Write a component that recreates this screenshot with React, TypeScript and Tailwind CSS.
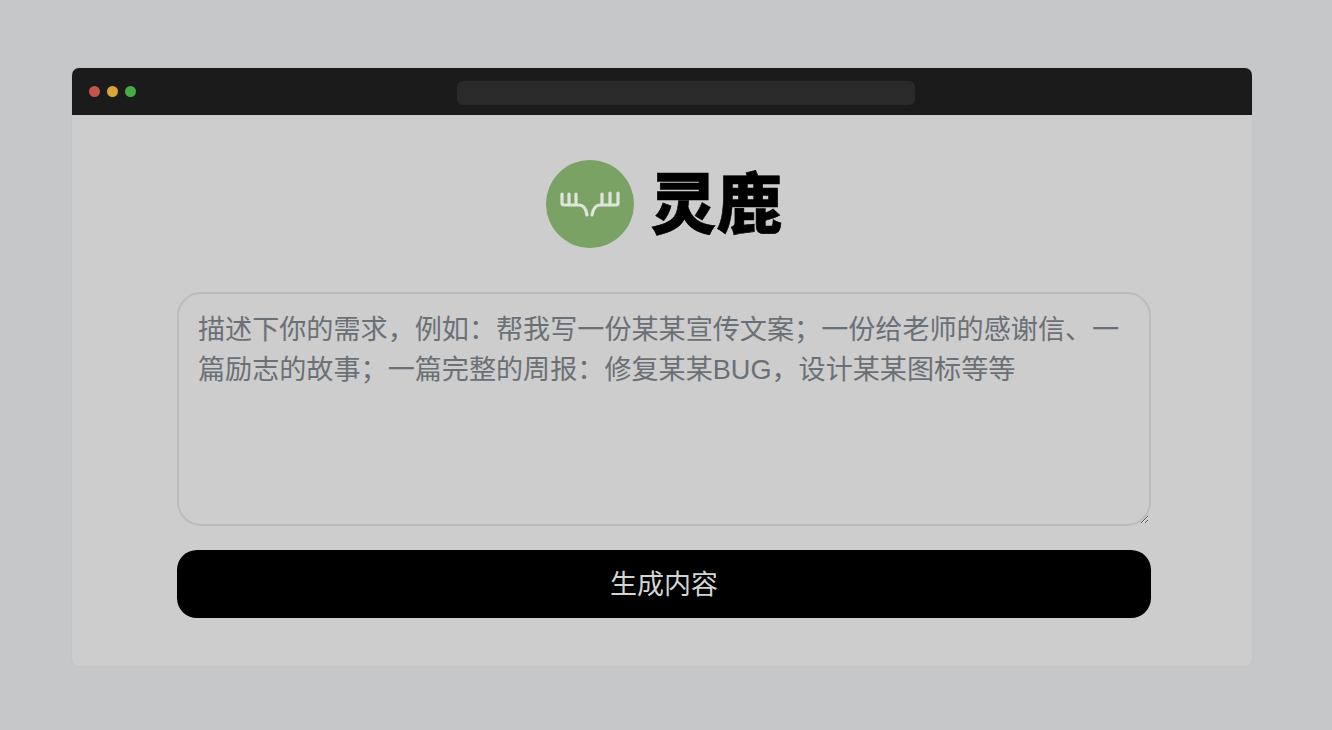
const FONT = "font-['Liberation_Sans','Noto_Sans_CJK_SC',sans-serif]";

const AntlerLogo = () => (
  <div className="flex h-[88px] w-[88px] items-center justify-center rounded-full bg-[#7ba265]">
    <svg width="60" height="26" viewBox="0 0 60 26" fill="none" stroke="#dfe5d8" strokeWidth="3.2" strokeLinecap="round" strokeLinejoin="round">
      <path d="M2 3v9c0 1.500.6 2 2 2h15c4 0 7 3 8 10M9 3v11M16 3v11" />
      <path d="M58 2v10c0 1.500-.6 2-2 2H40c-5 0-7 4-8 10M50 2v12M42 3v11" />
    </svg>
  </div>
);

export default function App() {
  return (
    <div className={`${FONT} min-h-[730px] bg-[#c6c7c9] pb-[63px] pl-[71px] pr-[79px] pt-[67px]`}>
      <div className="flex h-[600px] flex-col overflow-hidden rounded-lg border border-[#c3c4c5] bg-[#cdcdcd]">
        <div className="relative flex h-[47px] shrink-0 items-center bg-[#1b1b1b] pl-[17px]">
          <div className="flex gap-[7px]">
            <span className="h-[11px] w-[11px] rounded-full bg-[#c4554d]" />
            <span className="h-[11px] w-[11px] rounded-full bg-[#d8a437]" />
            <span className="h-[11px] w-[11px] rounded-full bg-[#4aab45]" />
          </div>
          <div className="absolute left-[385px] top-[13px] h-[24px] w-[458px] rounded-md bg-[#2a2a2a]" />
        </div>
        <div className="flex flex-1 flex-col pl-[105px] pr-[101px]">
          <div className="mt-[45px] flex items-center justify-center gap-[17px]">
            <AntlerLogo />
            <span className="pt-[2px] text-[66px] font-black leading-[86px] text-black [-webkit-text-stroke:0.6px_black]">灵鹿</span>
          </div>
          <textarea
            readOnly
            className="mt-[44px] h-[234px] w-full rounded-[24px] border-2 border-[#bcbcbe] bg-transparent px-[19px] py-4 text-[27.1px] leading-[40px] outline-none placeholder:text-[#6b7075]"
            placeholder="描述下你的需求，例如：帮我写一份某某宣传文案；一份给老师的感谢信、一篇励志的故事；一篇完整的周报：修复某某BUG，设计某某图标等等"
          />
          <button className="mt-[24px] h-[68px] w-full rounded-[20px] bg-black pt-[3px] text-[27px] text-[#d4d4d4]">生成内容</button>
        </div>
      </div>
    </div>
  );
}
